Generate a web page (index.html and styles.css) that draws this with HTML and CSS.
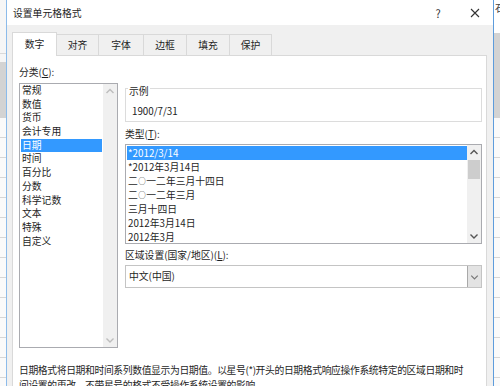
FILE: index.html
```html
<!DOCTYPE html>
<html lang="zh-CN">
<head>
<meta charset="utf-8">
<title>设置单元格格式</title>
<link rel="stylesheet" href="styles.css">
</head>
<body>
<div class="desk">
  <div class="strip strip-left"></div>
  <div class="dialog">
    <div class="titlebar">
      <span class="title">设置单元格格式</span>
      <span class="help">?</span>
      <span class="close"><svg width="10" height="10" viewBox="0 0 10 10"><path d="M1 1L9 9M9 1L1 9" stroke="#333" stroke-width="1.1" fill="none"/></svg></span>
    </div>
    <div class="tabs">
      <div class="tab t1 active">数字</div>
      <div class="tab t2">对齐</div>
      <div class="tab t3">字体</div>
      <div class="tab t4">边框</div>
      <div class="tab t5">填充</div>
      <div class="tab t6">保护</div>
    </div>
    <div class="panel">
      <div class="cols">
        <div class="col-left">
          <div class="label">分类(<u>C</u>):</div>
          <div class="listbox cat">
            <ul class="items">
              <li>常规</li>
              <li>数值</li>
              <li>货币</li>
              <li>会计专用</li>
              <li class="sel">日期</li>
              <li>时间</li>
              <li>百分比</li>
              <li>分数</li>
              <li>科学记数</li>
              <li>文本</li>
              <li>特殊</li>
              <li>自定义</li>
            </ul>
            <div class="vscroll disabled">
              <span class="arrow"><svg width="14" height="14" viewBox="0 0 14 14"><polyline points="3.5,9 7,5.5 10.5,9" fill="none" stroke="#bdbdbd" stroke-width="1.4"/></svg></span>
              <span class="arrow"><svg width="14" height="14" viewBox="0 0 14 14"><polyline points="3.5,5.5 7,9 10.5,5.5" fill="none" stroke="#bdbdbd" stroke-width="1.4"/></svg></span>
            </div>
          </div>
        </div>
        <div class="col-right">
          <div class="sample">
            <div class="sample-legend">示例</div>
            <div class="sample-val">1900/7/31</div>
          </div>
          <div class="label type-label">类型(<u>T</u>):</div>
          <div class="listbox types">
            <ul class="items">
              <li class="sel">*2012/3/14</li>
              <li>*2012年3月14日</li>
              <li>二<span class="zero">○</span>一二年三月十四日</li>
              <li>二<span class="zero">○</span>一二年三月</li>
              <li>三月十四日</li>
              <li>2012年3月14日</li>
              <li>2012年3月</li>
            </ul>
            <div class="vscroll">
              <span class="arrow"><svg width="14" height="14" viewBox="0 0 14 14"><polyline points="3.5,9 7,5.5 10.5,9" fill="none" stroke="#555" stroke-width="1.4"/></svg></span>
              <span class="thumb"></span>
              <span class="spacer"></span>
              <span class="arrow"><svg width="14" height="14" viewBox="0 0 14 14"><polyline points="3.5,5.5 7,9 10.5,5.5" fill="none" stroke="#555" stroke-width="1.4"/></svg></span>
            </div>
          </div>
          <div class="label locale-label">区域设置(国家/地区)(<u>L</u>):</div>
          <div class="combo">
            <span class="combo-text">中文(中国)</span>
            <span class="combo-btn"><svg width="14" height="14" viewBox="0 0 14 14"><polyline points="3.5,5.5 7,9 10.5,5.5" fill="none" stroke="#777" stroke-width="1.3"/></svg></span>
          </div>
        </div>
      </div>
      <p class="desc">日期格式将日期和时间系列数值显示为日期值。以星号(*)开头的日期格式响应操作系统特定的区域日期和时<br>间设置的更改。不带星号的格式不受操作系统设置的影响。</p>
    </div>
  </div>
  <div class="strip strip-right"><span class="sheet-text">石</span></div>
</div>
</body>
</html>
```
FILE: styles.css
```css
* { box-sizing: border-box; }
html, body { margin: 0; padding: 0; }
body {
  width: 500px;
  height: 386px;
  overflow: hidden;
  font-family: "Noto Sans CJK SC", "Noto Sans", sans-serif;
  font-size: 9.8px;
  color: #1e1e1e;
  background: #fff;
}
.desk { display: flex; height: 386px; }
.strip { flex: 0 0 6px; overflow: hidden; }
.strip-left {
  background:
    linear-gradient(#d3d3d3, #d3d3d3) 0 62px / 100% 56px no-repeat,
    linear-gradient(#d9d9d9, #d9d9d9) 0 53px / 100% 1px no-repeat,
    repeating-linear-gradient(to bottom, #fafafa 0 19px, #d6d6d6 19px 20px) 0 118px / 100% 300px no-repeat,
    #f6f6f6;
}
.strip-right {
  background:
    linear-gradient(#d3d3d3, #d3d3d3) 0 33px / 100% 85px no-repeat,
    repeating-linear-gradient(to bottom, #fafafa 0 19px, #d6d6d6 19px 20px) 0 118px / 100% 300px no-repeat,
    #fff;
}
.sheet-text { display: block; margin-left: 1px; line-height: 16px; font-size: 10px; color: #444; white-space: nowrap; }
.dialog {
  flex: 0 0 488px;
  display: flex;
  flex-direction: column;
  background: #f0f0f0;
  border-left: 1px solid #8cbbea;
  border-right: 1px solid #5d9cdc;
}
.titlebar {
  height: 25px;
  flex: 0 0 25px;
  display: flex;
  align-items: center;
  background: #fff;
  padding: 0 8px 0 6px;
}
.title { flex: 1; line-height: 14px; }
.help { width: 20px; text-align: center; font-size: 11px; color: #333; margin-right: 17px; line-height: 14px; }
.close { width: 20px; height: 14px; display: flex; align-items: center; justify-content: center; }
.tabs {
  height: 30px;
  flex: 0 0 30px;
  display: flex;
  align-items: flex-end;
  padding-left: 5px;
}
.tab {
  height: 21px;
  line-height: 20px;
  text-align: center;
  background: #f0f0f0;
  border: 1px solid #d9d9d9;
  border-bottom: none;
  margin-left: -1px;
}
.tab.t1 { margin-left: 0; width: 45px; }
.t2 { width: 43px; }
.t3 { width: 46px; }
.t4 { width: 44px; }
.t5 { width: 44px; }
.t6 { width: 43px; }
.tab.active {
  position: relative;
  z-index: 1;
  height: 24px;
  line-height: 23px;
  background: #fff;
  margin-bottom: -1px;
}
.panel {
  flex: 1;
  margin-left: 5px;
  width: 475px;
  background: #fff;
  border: 1px solid #d9d9d9;
  border-bottom: none;
  padding-left: 6px;
}
.cols { display: flex; gap: 7px; align-items: flex-start; }
.col-left { width: 99px; padding-top: 9px; }
.col-right { width: 357px; }
.label { line-height: 14px; white-space: nowrap; }
.label u { text-underline-offset: 1px; }
.listbox {
  display: flex;
  border: 1px solid #aaabb0;
  background: #fff;
}
.listbox.cat { margin-top: 4px; height: 265px; }
.items { list-style: none; margin: 0; padding: 0; flex: 1; overflow: hidden; }
.items li { white-space: nowrap; }
.cat .items li { height: 13.7px; line-height: 13.7px; margin: 0 1px; padding-left: 1px; }
.items li.sel { background: #3399ff; color: #fff; }
.zero { font-size: 7.5px; display: inline-block; width: 8.5px; text-align: center; vertical-align: 1px; }
.vscroll {
  flex: 0 0 14px;
  display: flex;
  flex-direction: column;
  justify-content: space-between;
  background: #f0f0f0;
}
.arrow { display: block; width: 14px; height: 14px; }
.arrow svg, .combo-btn svg { display: block; }
.sample {
  margin-top: 32px;
  border: 1px solid #dcdcdc;
  padding: 0 6px 3px;
}
.sample-legend {
  width: fit-content;
  margin: -4.5px 0 0 -4px;
  padding: 0 1px;
  background: #fff;
  line-height: 12px;
}
.sample-val { margin-top: 7.5px; line-height: 14px; }
.type-label { margin-top: 5px; }
.listbox.types { margin-top: 3px; height: 100px; }
.types .items { padding-top: 1px; }
.types .items li { height: 14px; line-height: 14px; margin-left: 1px; padding-left: 1px; }
.types .vscroll { justify-content: flex-start; }
.thumb { display: block; height: 19px; margin: 1px 1px 0 1px; background: #cdcdcd; }
.spacer { flex: 1; }
.locale-label { margin-top: 4px; }
.combo {
  margin-top: 3px;
  height: 23px;
  display: flex;
  align-items: stretch;
  border: 1px solid #c4c4c4;
}
.combo-text { flex: 1; padding-left: 3px; line-height: 21px; }
.combo-btn {
  width: 14px;
  display: flex;
  align-items: center;
  justify-content: center;
  background: #e3e3e3;
  border-left: 1px solid #a9a9a9;
}
.desc {
  margin: 15px 0 0;
  line-height: 15px;
  white-space: nowrap;
  letter-spacing: -0.36px;
}
```
